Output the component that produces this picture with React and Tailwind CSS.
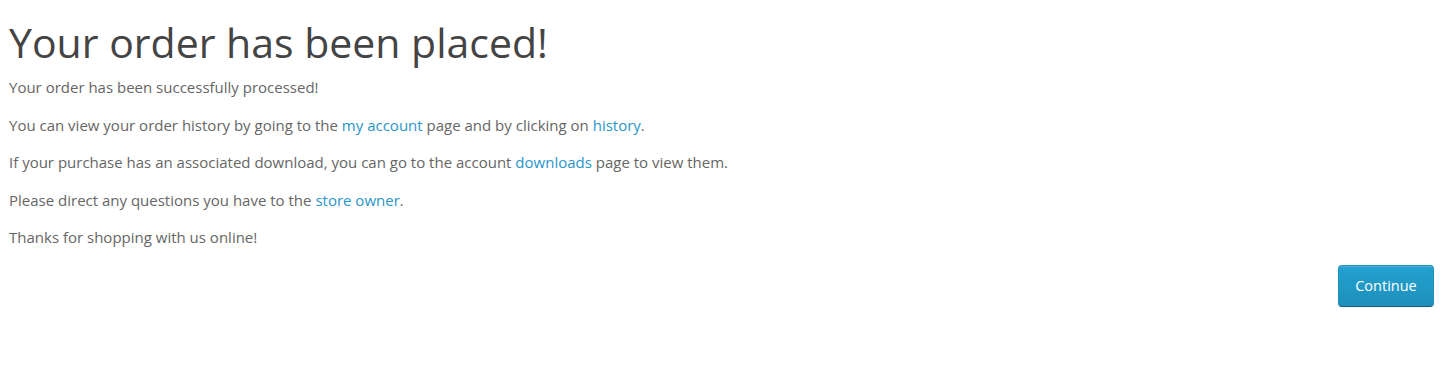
import React from 'react';

function App() {
  const link = 'text-[#2b95c9] hover:underline';
  return (
    <div className="w-[1445px] h-[370px] bg-white px-[9px] font-['Open_Sans',sans-serif] text-[15px] text-[#666]">
      <h1 className="pt-[18px] text-[41px] leading-[48px] text-[#444] font-normal">Your order has been placed!</h1>
      <div className="mt-[11px] flex flex-col gap-[17.5px] leading-[20px]">
        <p>Your order has been successfully processed!</p>
        <p>
          You can view your order history by going to the <a href="#" className={link}>my account</a> page and by clicking on <a href="#" className={link}>history</a>.
        </p>
        <p>
          If your purchase has an associated download, you can go to the account <a href="#" className={link}>downloads</a> page to view them.
        </p>
        <p>
          Please direct any questions you have to the <a href="#" className={link}>store owner</a>.
        </p>
        <p>Thanks for shopping with us online!</p>
      </div>
      <div className="flex justify-end pr-[2px] mt-[18px]">
        <button className="h-[42px] w-[96px] rounded-[4px] border border-[#1f90bb] border-b-[#145e7a] bg-gradient-to-b from-[#23a1d1] to-[#1f90bb] text-white text-[14.5px] shadow-[inset_0_1px_0_rgba(255,255,255,0.2),0_1px_2px_rgba(0,0,0,0.05)]">
          Continue
        </button>
      </div>
    </div>
  );
}

export default App;
